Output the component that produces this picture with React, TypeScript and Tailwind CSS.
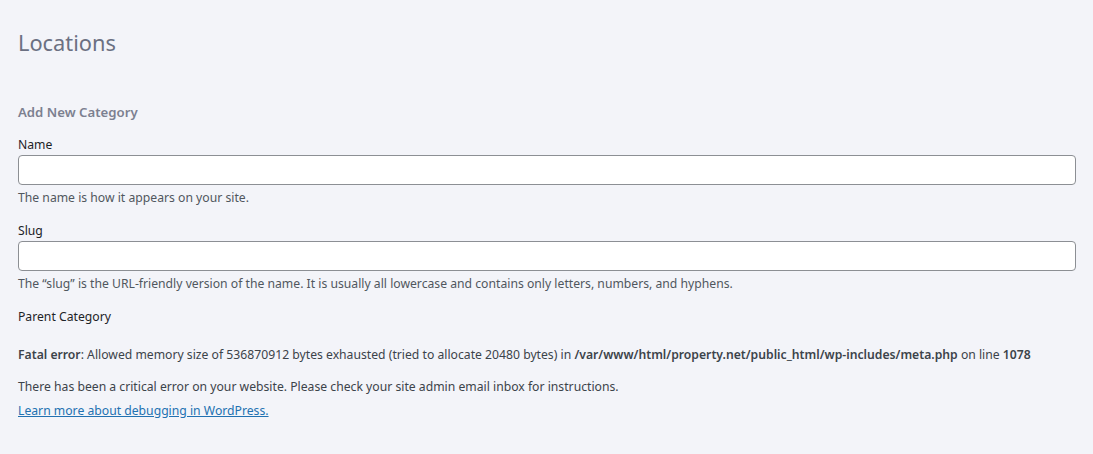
export default function App() {
    return (
        <div
            className="min-h-[454px] w-full bg-[#f3f4f9] pl-[18px] pr-[17px] text-[12.2px] text-[#3c434a]"
            style={{ fontFamily: '"Noto Sans", "Open Sans", sans-serif' }}
        >
            {/* Page title */}
            <h1 className="pt-[28px] text-[21.8px] font-normal leading-[29px] text-[#6b7082]">
                Locations
            </h1>

            {/* Add form */}
            <h2 className="mt-[46px] text-[13.2px] font-semibold leading-[18px] text-[#7c8090]">
                Add New Category
            </h2>

            <div className="mt-[15px]">
                <label className="block leading-[18px] text-[#1d2327]">Name</label>
                <input
                    type="text"
                    className="mt-[1px] block h-[30px] w-full rounded-[4px] border border-[#8c8f94] bg-white px-2"
                />
                <p className="mt-[4px] leading-[18px] text-[#50575e]">
                    The name is how it appears on your site.
                </p>
            </div>

            <div className="mt-[15px]">
                <label className="block leading-[18px] text-[#1d2327]">Slug</label>
                <input
                    type="text"
                    className="mt-[1px] block h-[30px] w-full rounded-[4px] border border-[#8c8f94] bg-white px-2"
                />
                <p className="mt-[4px] leading-[18px] text-[#50575e]">
                    The “slug” is the URL-friendly version of the name. It is usually all
                    lowercase and contains only letters, numbers, and hyphens.
                </p>
            </div>

            <div className="mt-[15px] leading-[18px] text-[#1d2327]">Parent Category</div>

            {/* PHP fatal error */}
            <p className="mt-[20px] leading-[18px]">
                <b className="font-semibold">Fatal error</b>: Allowed memory size of 536870912
                bytes exhausted (tried to allocate 20480 bytes) in{" "}
                <b className="font-semibold">
                    /var/www/html/property.net/public_html/wp-includes/meta.php
                </b>{" "}
                on line <b className="font-semibold">1078</b>
            </p>
            <p className="mt-[14px] leading-[18px]">
                There has been a critical error on your website. Please check your site admin
                email inbox for instructions.
            </p>
            <p className="mt-[6px] leading-[18px]">
                <a href="#" className="text-[#2271b1] underline">
                    Learn more about debugging in WordPress.
                </a>
            </p>
        </div>
    );
}
